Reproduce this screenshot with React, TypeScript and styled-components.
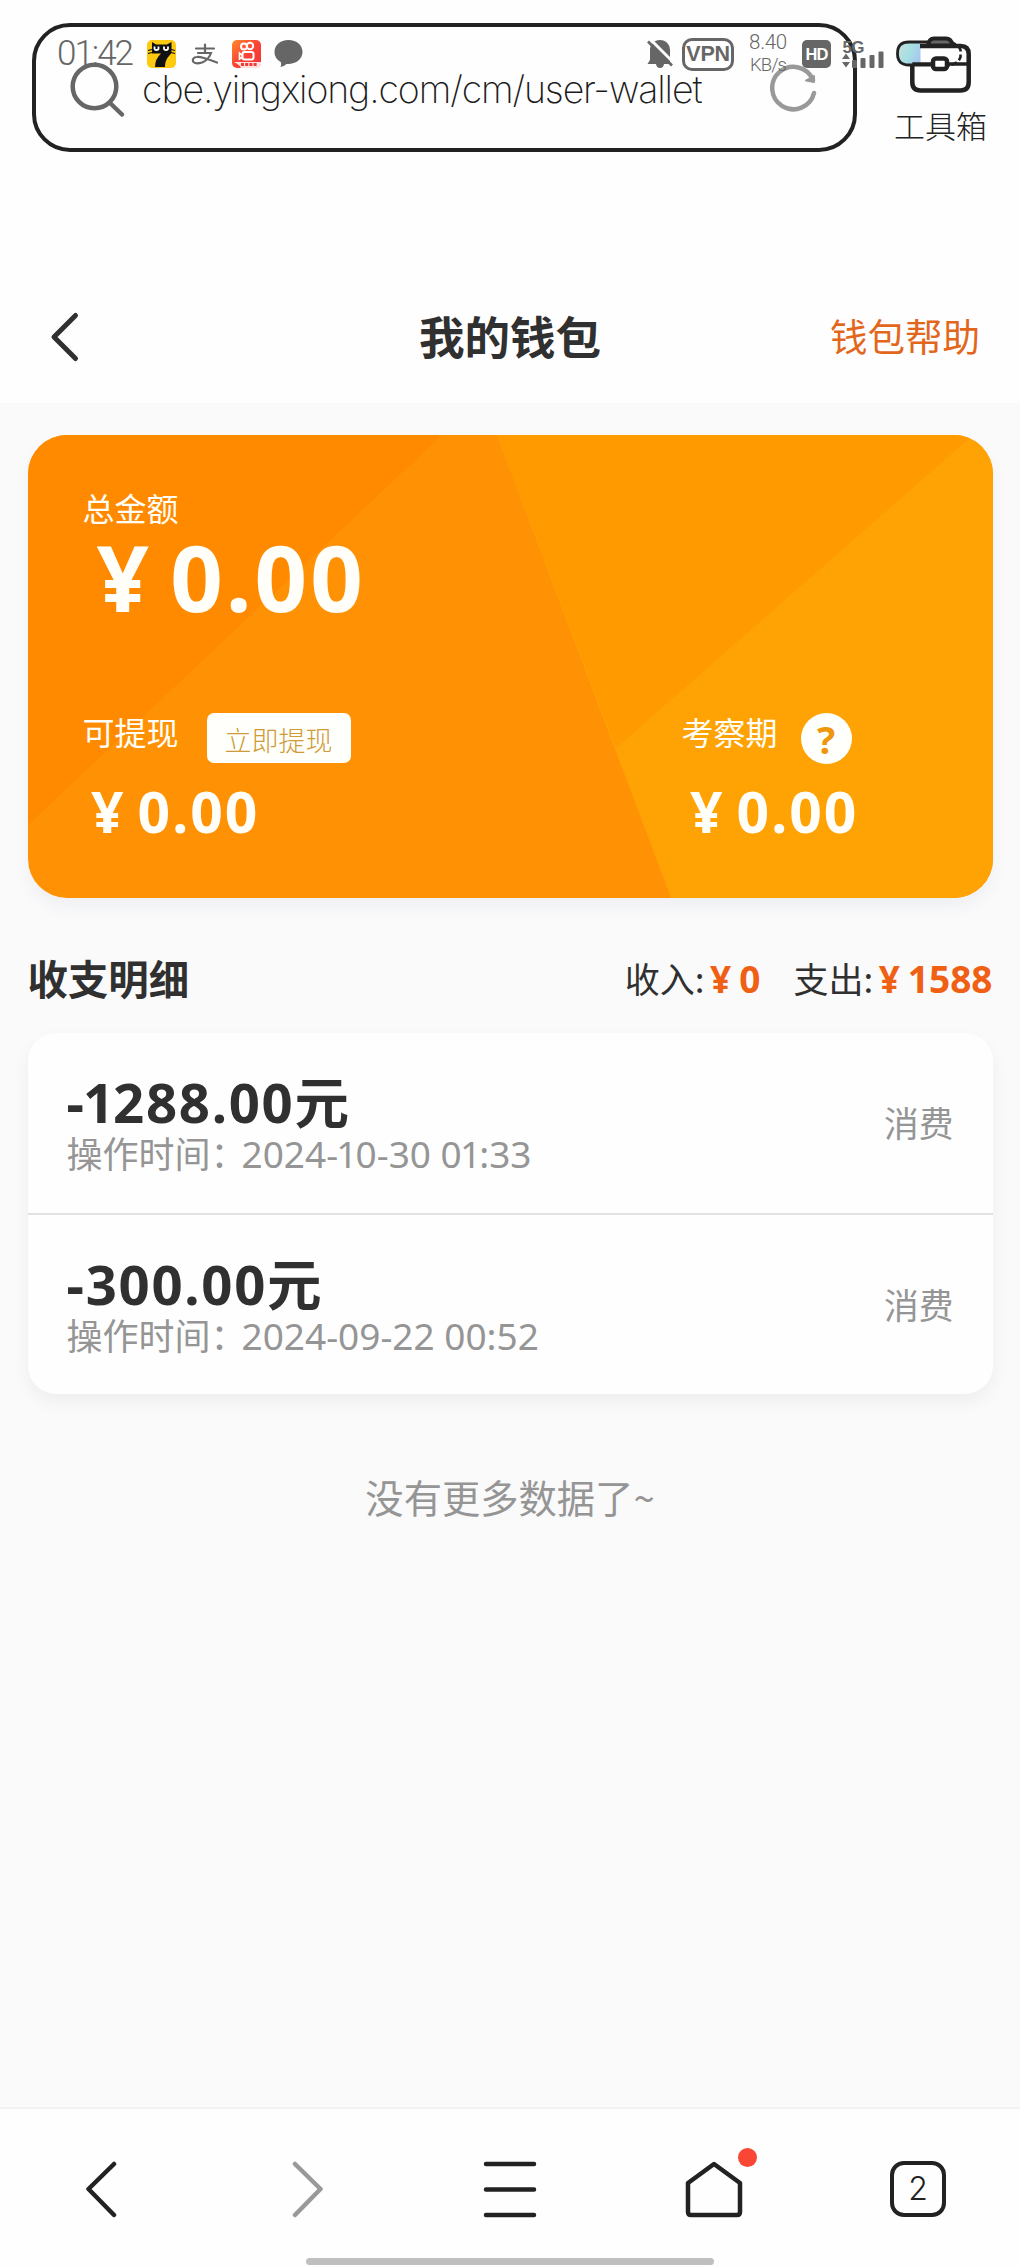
import React from "react";
import styled, { createGlobalStyle } from "styled-components";

const sans = `"Noto Sans", "Noto Sans CJK SC", sans-serif`;
const cjk = `"Noto Sans CJK SC", sans-serif`;

const Global = createGlobalStyle`
  * { box-sizing: border-box; }
  body { margin: 0; background: #fafafa; font-family: ${sans}; }
`;

const Screen = styled.div`
  position: relative;
  width: 1020px;
  height: 2267px;
  display: flex;
  flex-direction: column;
  overflow: hidden;
  background: #fafafa;
  color: #303030;
`;

/* Text whose advance is tuned with tracking */
const Label = styled.span<{ $size: number; $line: number; $track?: number; $weight?: number; $color?: string; $font?: string }>`
  display: block;
  white-space: nowrap;
  font-family: ${(p) => p.$font ?? sans};
  font-size: ${(p) => p.$size}px;
  line-height: ${(p) => p.$line}px;
  letter-spacing: ${(p) => p.$track ?? 0}px;
  font-weight: ${(p) => p.$weight ?? 400};
  color: ${(p) => p.$color ?? "inherit"};
`;

/* ---------- browser bar ---------- */
const BrowserBar = styled.header`
  height: 270px;
  flex: none;
  padding: 23px 0 0 32px;
  display: flex;
  align-items: flex-start;
  background: #fefefe;
`;
const AddressBox = styled.div`
  width: 825px;
  height: 129px;
  border: 4.5px solid #222;
  border-radius: 38px;
  display: flex;
  align-items: flex-start;
  padding: 35px 35px 0 34px;
`;
const AddressText = styled.div`
  flex: 1;
  padding: 2px 0 0 16px;
`;
const Toolbox = styled.div`
  width: 163px;
  padding: 12px 0 0 37px;
`;
const ToolIcon = styled.svg`
  display: block;
  position: relative;
  z-index: 1;
  margin: 0 0 8px 14px;
`;

/* ---------- system status overlay ---------- */
const StatusBar = styled.div`
  position: absolute;
  inset: 34px 57px auto 57px;
  height: 40px;
  display: flex;
  align-items: center;
  color: #666;
  svg {
    display: block;
    flex: none;
  }
`;
const Clock = styled.div`
  width: 90px;
`;
const AppIcons = styled.div`
  display: flex;
  gap: 13px;
  flex: 1;
`;
const VpnBadge = styled.div`
  width: 52px;
  height: 33px;
  margin-left: 9px;
  border: 3px solid #666;
  border-radius: 10px;
  display: flex;
  align-items: center;
  justify-content: center;
`;
const Speed = styled.div`
  width: 36px;
  height: 39px;
  margin: 0 16px 3px;
  display: flex;
  flex-direction: column;
  align-items: center;
  justify-content: space-between;
`;
const HdBadge = styled.div`
  width: 29px;
  height: 28px;
  border-radius: 5px;
  background: #666;
  display: flex;
  align-items: center;
  justify-content: center;
`;
const Signal = styled.div`
  width: 43px;
  height: 30px;
  margin: 0 11px;
`;

/* ---------- page header ---------- */
const PageHeader = styled.div`
  height: 133px;
  flex: none;
  padding: 0 40px;
  display: grid;
  grid-template-columns: 1fr auto 1fr;
  align-items: center;
  background: #fefefe;
`;
const BackButton = styled.div`
  display: flex;
  padding-left: 9px;
`;
const HeaderText = styled.div`
  justify-self: end;
  padding-bottom: 3px;
`;

/* ---------- balance card ---------- */
const Main = styled.main`
  flex: 1;
  padding: 32px 27.5px 0;
`;
const CardShadow = styled.div`
  border-radius: 39px;
  box-shadow: 0 9px 16px rgba(60, 80, 150, 0.055);
`;
const BalanceCard = styled.section`
  position: relative;
  height: 463px;
  border-radius: 39px;
  overflow: hidden;
  color: #fffef8;
  padding: 49px 56px 0 55px;
`;
const CardArt = styled.svg`
  position: absolute;
  inset: 0;
`;
const CardBody = styled.div`
  position: relative;
`;
const Money = styled.div<{ $size: number; $line: number; $indent: number; $gap: number; $track: number }>`
  display: flex;
  gap: ${(p) => p.$gap}px;
  padding-left: ${(p) => p.$indent}px;
  font-size: ${(p) => p.$size}px;
  line-height: ${(p) => p.$line}px;
  letter-spacing: ${(p) => p.$track}px;
  font-weight: 700;
`;
const Split = styled.div`
  display: grid;
  grid-template-columns: 599px 1fr;
  margin-top: 89px;
`;
const SplitHead = styled.div`
  height: 52px;
  display: flex;
  align-items: flex-start;
`;
const Withdraw = styled.button`
  width: 144px;
  height: 50px;
  margin-left: 28px;
  padding: 3px 0 0;
  border: 0;
  border-radius: 7px;
  background: #fffffb;
  display: flex;
  align-items: center;
  justify-content: center;
`;
const HelpDot = styled.div`
  width: 51px;
  height: 51px;
  margin-left: 23px;
  border-radius: 50%;
  background: #fffffb;
  display: flex;
  align-items: center;
  justify-content: center;
`;

/* ---------- records ---------- */
const RecordsHead = styled.div`
  height: 135px;
  padding-top: 24px;
  display: flex;
  align-items: center;
  justify-content: space-between;
`;
const Totals = styled.div`
  display: flex;
  align-items: center;
`;
const TotalValue = styled.div<{ $end?: number }>`
  display: flex;
  gap: 8px;
  margin: 2px ${(p) => p.$end ?? 0}px 0 5.5px;
  color: #f06014;
  font-size: 37px;
  line-height: 44px;
  font-weight: 700;
`;
const RecordList = styled.section`
  height: 361px;
  border-radius: 28px;
  background: #fefefe;
  box-shadow: 0 8px 18px rgba(0, 0, 0, 0.05);
`;
const Record = styled.div`
  height: 180px;
  padding: 39px 39px 0 39px;
  display: flex;
  justify-content: space-between;
  & + & {
    border-top: 2px solid #e2e2e2;
  }
`;
const Stamp = styled.span`
  margin-left: -5px;
  font-size: 37px;
`;
const NarrowOne = styled.span`
  margin: 0 -0.05em;
`;
const Empty = styled.div`
  margin-top: 75px;
  display: flex;
  justify-content: center;
`;

/* ---------- bottom navigation ---------- */
const NavBar = styled.nav`
  height: 160px;
  flex: none;
  border-top: 2px solid #f2f2f2;
  background: #fefefe;
  display: flex;
  flex-direction: column;
  align-items: center;
`;
const NavItems = styled.div`
  width: 100%;
  height: 149px;
  display: grid;
  grid-template-columns: repeat(5, 204px);
  align-items: center;
  justify-items: center;
  padding-top: 11px;
`;
const HomeWrap = styled.div`
  position: relative;
  display: flex;
`;
const RedDot = styled.i`
  position: absolute;
  right: -13px;
  top: -13px;
  width: 19px;
  height: 19px;
  border-radius: 50%;
  background: #f94635;
`;
const TabCount = styled.div`
  width: 56px;
  height: 56px;
  border: 4px solid #222;
  border-radius: 14px;
  display: flex;
  align-items: center;
  justify-content: center;
`;
const HomeIndicator = styled.div`
  width: 408px;
  height: 7px;
  border-radius: 4px;
  background: #bfbfbf;
`;

const Chevron = ({ d, color, w, h, stroke }: { d: string; color: string; w: number; h: number; stroke: number }) => (
  <svg width={w} height={h} viewBox={`0 0 ${w} ${h}`} fill="none" stroke={color} strokeWidth={stroke} strokeLinecap="round" strokeLinejoin="round">
    <path d={d} />
  </svg>
);

/* Sets the digit 1 on a narrower advance than the tabular figures */
const Digits = ({ text }: { text: string }) => (
  <>{text.split(/(1)/).map((part, i) => (part === "1" ? <NarrowOne key={i}>1</NarrowOne> : part))}</>
);

const records = [
  { amount: "-1288.00", time: "2024-10-30 01:33" },
  { amount: "-300.00", time: "2024-09-22 00:52" },
];

export default function App() {
  return (
    <>
      <Global />
      <Screen>
        <BrowserBar>
          <AddressBox>
            <svg width="56" height="56" viewBox="0 0 56 56" fill="none" stroke="#666" strokeWidth="4.5" strokeLinecap="round">
              <circle cx="24.5" cy="24.5" r="21.8" />
              <path d="M40 41L52 52.5" />
            </svg>
            <AddressText>
              <Label $size={37.5} $line={52} $weight={200} $track={-1.12} $font={`Inter, sans-serif`} $color="#1c1c1c">cbe.yingxiong.com/cm/user-wallet</Label>
            </AddressText>
            <svg width="48" height="50" viewBox="0 0 48 50" fill="none" stroke="#999" strokeWidth="4.5" strokeLinecap="round" strokeLinejoin="round">
              <path d="M44 31A21.2 21.2 0 1 1 43 18" />
              <path d="M44 14V20L36 18.500Z" fill="#999" strokeWidth="2" />
            </svg>
          </AddressBox>
          <Toolbox>
            <ToolIcon width="64" height="60" viewBox="0 0 64 60" fill="none" stroke="#222" strokeWidth="4.5" strokeLinejoin="round">
              <path d="M4.300 30V47Q4.300 55.500 12.500 55.500H52.500Q60.700 55.500 60.700 47V19Q60.700 11 52.500 11H12" />
              <path d="M4.300 29H25M39 29H60.700" strokeWidth="3.500" />
              <path d="M20 10.500Q21 3.500 26 3.500H38Q43 3.500 45 10.500Z" fill="#666" strokeWidth="4" />
              <rect x="25" y="23.500" width="14" height="10.500" rx="3" fill="#fefefe" />
            </ToolIcon>
            <Label $size={31} $line={44} $weight={300} $font={cjk} $color="#222">工具箱</Label>
          </Toolbox>
        </BrowserBar>

        <StatusBar>
          <Clock><Label $size={35} $line={40} $weight={300} $track={-2} $font={`Roboto, sans-serif`}>01:42</Label></Clock>
          <AppIcons>
            <svg width="29" height="28" viewBox="0 0 29 28">
              <rect width="29" height="28" rx="5" fill="#fdca10" />
              <path d="M5 2L9 4.500H20L24.500 2V13L22 16Q18 20 18 27H8Q8 19 14 13.500H5Z" fill="#111" />
              <path d="M1 10.500L5 9.500M1 13.500L5 12.500M28 10.500L24 9.500M28 13.500L24 12.500" stroke="#111" strokeWidth="1.200" />
              <path d="M7.500 6.500V8.500Q7.500 10 9.500 10T11.500 8.500V6.500M17 6.500V8.500Q17 10 19 10T21 8.500V6.500" stroke="#fff" strokeWidth="1.800" fill="none" />
            </svg>
            <svg width="30" height="28" viewBox="0 0 30 28" fill="none" stroke="#666" strokeWidth="2.200" strokeLinecap="round">
              <path d="M7 8.500H25M16 4.500V13M9 13H22Q19.500 20 13 22.500Q6 24.500 4 21.500Q3 17.500 8 17Q12 16.500 28 22.500" />
            </svg>
            <svg width="29" height="28" viewBox="0 0 29 28" fill="none">
              <defs>
                <linearGradient id="redApp" x1="0" x2="1" y1="0" y2="1">
                  <stop offset="0" stopColor="#ff8a2a" />
                  <stop offset=".5" stopColor="#fa4436" />
                  <stop offset="1" stopColor="#f0353a" />
                </linearGradient>
              </defs>
              <rect width="29" height="28" rx="5" fill="url(#redApp)" />
              <circle cx="12" cy="6.500" r="3" stroke="#fff" strokeWidth="2" />
              <circle cx="18" cy="6" r="3.200" stroke="#fff" strokeWidth="2" />
              <rect x="10.500" y="12" width="11" height="7.500" rx="2" stroke="#fff" strokeWidth="2" />
              <path d="M10.500 15.500L7.500 13V19L10.500 17" stroke="#fff" strokeWidth="1.600" />
              <path d="M2 22H29V24Q28 28 24 28H9Q8 25 2 22Z" fill="#fff" opacity=".85" />
              <path d="M9 24.500H25" stroke="#ee3b33" strokeWidth="3" strokeDasharray="3 1.200" />
            </svg>
            <svg width="30" height="28" viewBox="0 0 30 28" fill="#666">
              <path d="M14.500 0C6 0 .5 5 .5 12C.5 16.500 3 20 7 22.200Q7.500 25 6.500 27Q10 26.500 12.500 24H15C23 23.500 28.500 18.500 28.500 12C28.500 5 23 0 14.500 0Z" />
            </svg>
          </AppIcons>
          <svg width="26" height="30" viewBox="0 0 26 30">
            <path d="M13 1C7 1 3 5.500 3 11V21L.5 25H9Q9.500 29 13 29T17 25H23V11C23 5.500 19 1 13 1Z" fill="#666" />
            <path d="M2.500 -.5L27 24" stroke="#fefefe" strokeWidth="3" />
            <path d="M1 2.500L25 26.500" stroke="#666" strokeWidth="2.600" />
          </svg>
          <VpnBadge><Label $size={21.5} $line={26} $weight={700} $track={-0.3} $font={`"Liberation Sans", sans-serif`}>VPN</Label></VpnBadge>
          <Speed>
            <Label $size={20.5} $line={18} $weight={300} $track={-0.3} $font={`Roboto, sans-serif`}>8.40</Label>
            <Label $size={18.5} $line={14} $weight={300} $track={-1} $font={`Roboto, sans-serif`}>KB/s</Label>
          </Speed>
          <HdBadge><Label $size={16.5} $line={24} $weight={700} $track={-1} $color="#fff" $font={`"Liberation Sans", sans-serif`}>HD</Label></HdBadge>
          <Signal>
            <svg width="43" height="30" viewBox="0 0 43 30" fill="#666">
              <text x="0.500" y="14" fontSize="17" fontWeight="700" fontFamily="Liberation Sans, sans-serif" textLength="22">5G</text>
              <path d="M4 14.500L8 20H0ZM4 28.500L8 23H0Z" />
              <rect x="10" y="21" width="5" height="8" rx="1" />
              <rect x="18.500" y="19" width="5" height="10" rx="1" />
              <rect x="27.500" y="16" width="5" height="13" rx="1" />
              <rect x="36.500" y="12.500" width="5" height="16.500" rx="1" />
            </svg>
          </Signal>
          <svg width="67" height="28" viewBox="0 0 67 28" fill="none">
            <defs>
              <linearGradient id="charge" x1="0" x2="1" y1="0.300" y2="0.700">
                <stop offset="0" stopColor="#c4dede" />
                <stop offset=".5" stopColor="#a5e0e2" />
                <stop offset="1" stopColor="#a9c4f2" />
              </linearGradient>
            </defs>
            <rect x="1.500" y="1.500" width="62" height="24" rx="12" fill="#fefefe" />
            <path d="M24.500 2H13Q3 2 2 13.500Q3 25 13 25H24.500Z" fill="url(#charge)" />
            <path d="M54 25H13Q1.500 25 1.500 13.500T13 2H54" stroke="#222" strokeWidth="2.800" />
            <path d="M54 2Q62 4 64.500 10V17Q62 24 54 25" stroke="#222" strokeWidth="2.600" strokeDasharray="6 3" />
          </svg>
        </StatusBar>

        <PageHeader>
          <BackButton>
            <Chevron d="M26.500 5.500L5 27L26.500 48.500" color="#303030" w={32} h={54} stroke={5} />
          </BackButton>
          <HeaderText><Label $size={45.5} $line={60} $weight={700} $font={cjk}>我的钱包</Label></HeaderText>
          <HeaderText><Label $size={37.5} $line={50} $font={cjk} $color="#e2671d">钱包帮助</Label></HeaderText>
        </PageHeader>

        <Main>
          <CardShadow>
            <BalanceCard>
              <CardArt width="965" height="463" viewBox="0 0 965 463">
                <rect width="965" height="463" fill="#ff9204" />
                <path d="M0 0H414L0 390Z" fill="#ff8a00" />
                <path d="M469 0H965V463H643Z" fill="#ffa204" />
                <path d="M469 0H945L588 313Z" fill="#ff9a00" />
              </CardArt>
              <CardBody>
                <Label $size={32} $line={46} $font={cjk}>总金额</Label>
                <Money $size={92} $line={94} $indent={14} $gap={18} $track={3}><span>¥</span><span>0.00</span></Money>
                <Split>
                  <div>
                    <SplitHead>
                      <Label $size={32} $line={36} $font={cjk}>可提现</Label>
                      <Withdraw><Label $size={27} $line={34} $font={cjk} $weight={300} $color="#cf9a38">立即提现</Label></Withdraw>
                    </SplitHead>
                    <Money $size={57} $line={93} $indent={8.5} $gap={12} $track={2}><span>¥</span><span>0.00</span></Money>
                  </div>
                  <div>
                    <SplitHead>
                      <Label $size={32} $line={36} $font={cjk}>考察期</Label>
                      <HelpDot><Label $size={38} $line={48} $weight={700} $color="#f0960c">?</Label></HelpDot>
                    </SplitHead>
                    <Money $size={57} $line={93} $indent={8.5} $gap={12} $track={2}><span>¥</span><span>0.00</span></Money>
                  </div>
                </Split>
              </CardBody>
            </BalanceCard>
          </CardShadow>

          <RecordsHead>
            <Label $size={40.4} $line={56} $weight={700} $font={cjk}>收支明细</Label>
            <Totals>
              <Label $size={35} $line={50} $font={cjk}>收入:</Label>
              <TotalValue $end={33}><span>¥</span><span>0</span></TotalValue>
              <Label $size={35} $line={50} $font={cjk}>支出:</Label>
              <TotalValue><span>¥</span><span>1588</span></TotalValue>
            </Totals>
          </RecordsHead>

          <RecordList>
            {records.map((r) => (
              <Record key={r.time}>
                <div>
                  <Label $size={54.5} $line={60} $weight={700} $track={1.7}><Digits text={r.amount} />元</Label>
                  <Label $size={36} $line={44} $color="#959595">操作时间：<Stamp><Digits text={r.time} /></Stamp></Label>
                </div>
                <Label $size={34.8} $line={100} $font={cjk} $color="#959595">消费</Label>
              </Record>
            ))}
          </RecordList>
          <Empty><Label $size={38.3} $line={56} $font={cjk} $color="#959595">没有更多数据了~</Label></Empty>
        </Main>

        <NavBar>
          <NavItems>
            <Chevron d="M28 3L2.500 28L28 54" color="#222" w={33} h={57} stroke={4.5} />
            <Chevron d="M5 3L30.500 28L5 54" color="#999" w={33} h={57} stroke={4.5} />
            <Chevron d="M3 3H51M3 28.500H51M3 54H51" color="#222" w={54} h={57} stroke={4.5} />
            <HomeWrap>
              <Chevron d="M30 3L56 22V51Q56 54 53 54H7Q4 54 4 51V22Z" color="#222" w={60} h={57} stroke={4.5} />
              <RedDot />
            </HomeWrap>
            <TabCount><Label $size={32} $line={40} $weight={350} $font={`Inter, sans-serif`} $color="#222">2</Label></TabCount>
          </NavItems>
          <HomeIndicator />
        </NavBar>
      </Screen>
    </>
  );
}
